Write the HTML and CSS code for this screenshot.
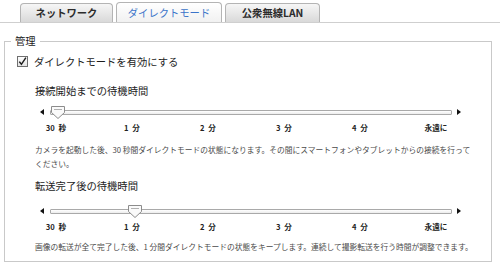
FILE: index.html
```html
<!doctype html>
<html lang="ja">
<head>
  <meta charset="utf-8">
  <link rel="stylesheet" href="styles.css">
</head>
<body>

  <div class="tabs">
    <div class="tab">ネットワーク</div>
    <div class="tab tab-active">ダイレクトモード</div>
    <div class="tab tab-last">公衆無線LAN</div>
  </div>

  <fieldset class="panel">
    <legend class="panel-title">管理</legend>

    <label class="check-row">
      <svg class="check-box" width="11" height="11" viewBox="0 0 11 11">
        <defs>
          <linearGradient id="cbg" x1="0" y1="0" x2="0" y2="1">
            <stop offset="0" stop-color="#ffffff"/>
            <stop offset="1" stop-color="#e2e2e2"/>
          </linearGradient>
        </defs>
        <rect x="0.5" y="0.5" width="10" height="10" fill="url(#cbg)" stroke="#6f6f6f"/>
        <path d="M2.3 5.6 L4.4 8.3 L8.9 1.6" fill="none" stroke="#1e1e1e" stroke-width="1.5"/>
      </svg>
      <span>ダイレクトモードを有効にする</span>
    </label>

    <div class="section">
      <div class="section-title">接続開始までの待機時間</div>
      <div class="slider">
        <span class="arrow arrow-left"></span>
        <div class="track">
          <svg class="thumb" style="left: 0px" width="14" height="13" viewBox="0 0 14 13">
            <polygon points="0.5,0.5 13.5,0.5 13.5,6.5 7,12.5 0.5,6.5" fill="#fafafa" stroke="#8c8c8c"/>
            <line x1="3" y1="3.5" x2="11" y2="3.5" stroke="#b0b0b0"/>
          </svg>
        </div>
        <span class="arrow arrow-right"></span>
      </div>
      <div class="ticks">
        <span>30 秒</span>
        <span>1 分</span>
        <span>2 分</span>
        <span>3 分</span>
        <span>4 分</span>
        <span>永遠に</span>
      </div>
      <p class="note">カメラを起動した後、30 秒間ダイレクトモードの状態になります。その間にスマートフォンやタブレットからの接続を行ってください。</p>
    </div>

    <div class="section">
      <div class="section-title title-second">転送完了後の待機時間</div>
      <div class="slider slider-second">
        <span class="arrow arrow-left"></span>
        <div class="track">
          <svg class="thumb" style="left: 77px" width="14" height="13" viewBox="0 0 14 13">
            <polygon points="0.5,0.5 13.5,0.5 13.5,6.5 7,12.5 0.5,6.5" fill="#fafafa" stroke="#8c8c8c"/>
            <line x1="3" y1="3.5" x2="11" y2="3.5" stroke="#b0b0b0"/>
          </svg>
        </div>
        <span class="arrow arrow-right"></span>
      </div>
      <div class="ticks">
        <span>30 秒</span>
        <span>1 分</span>
        <span>2 分</span>
        <span>3 分</span>
        <span>4 分</span>
        <span>永遠に</span>
      </div>
      <p class="note note-last">画像の転送が全て完了した後、1 分間ダイレクトモードの状態をキープします。連続して撮影転送を行う時間が調整できます。</p>
    </div>
  </fieldset>

</body>
</html>
```

FILE: styles.css
```css
html, body {
  margin: 0;
  padding: 0;
  background-color: #ffffff;
  font-family: "Noto Sans CJK JP", "Noto Sans", sans-serif;
  color: #222;
}

.tabs {
  display: flex;
  align-items: flex-end;
  gap: 3px;
  height: 22px;
  padding-left: 20px;
  border-bottom: 1px solid #cfcfcf;
}

.tab {
  width: 93px;
  height: 19px;
  box-sizing: border-box;
  border: 1px solid #b4b4b4;
  border-bottom: none;
  border-radius: 4px 4px 0 0;
  background: linear-gradient(to bottom, #f6f6f6, #d9d9d9);
  font-size: 10.3px;
  font-weight: bold;
  line-height: 18px;
  text-align: center;
  color: #2c2c2c;
}

.tab-active {
  width: 106px;
  height: 20px;
  line-height: 19px;
  background: linear-gradient(to bottom, #ffffff, #f1f1f1);
  color: #3b74c9;
  font-weight: normal;
}

.tab-last {
  width: 95px;
}

.panel {
  margin: 11px 8px 0 4px;
  padding: 6px 12px 7px 12px;
  border: 1px solid #c9c9c9;
}

.panel-title {
  margin-left: -6px;
  padding: 0 4px;
  font-size: 10.3px;
  line-height: 14px;
  color: #222;
}

.check-row {
  display: flex;
  align-items: center;
  gap: 6px;
  height: 14px;
  font-size: 10.3px;
  color: #1c1c1c;
}

.check-box {
  display: block;
}

.section {
  padding-left: 18px;
}

.section-title {
  margin-top: 16px;
  font-size: 10.3px;
  line-height: 14px;
  color: #222;
}

.title-second {
  margin-top: 8px;
}

.slider {
  display: flex;
  align-items: center;
  height: 14px;
  margin-top: 7px;
}

.slider-second {
  margin-top: 11px;
}

.arrow {
  width: 0;
  height: 0;
  border-top: 3.5px solid transparent;
  border-bottom: 3.5px solid transparent;
}

.arrow-left {
  margin-left: 5px;
  border-right: 4px solid #111;
}

.arrow-right {
  margin-left: 5px;
  border-left: 4px solid #111;
}

.track {
  position: relative;
  width: 402px;
  height: 5px;
  box-sizing: border-box;
  margin-left: 6px;
  border: 1px solid #a9a9a9;
  border-radius: 1px;
  background: linear-gradient(to bottom, #ffffff, #ececec);
}

.thumb {
  position: absolute;
  top: -5px;
  display: block;
}

.ticks {
  display: grid;
  grid-template-columns: repeat(6, 76px);
  margin: 4px 0 0 -17px;
  font-size: 7.6px;
  font-weight: bold;
  line-height: 10px;
  text-align: center;
  word-spacing: 2px;
  color: #222;
}

.note {
  margin: 10px 0 0 0;
  padding-right: 4px;
  font-size: 7.75px;
  line-height: 14px;
  color: #4a4a4a;
}

.note-last {
  margin-top: 8px;
}
```
